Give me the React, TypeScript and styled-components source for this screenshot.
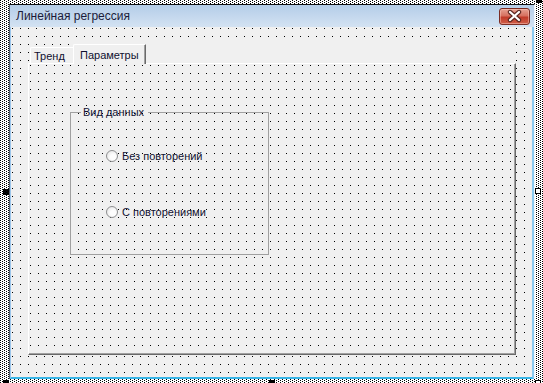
import styled, { createGlobalStyle } from "styled-components";

const GlobalStyle = createGlobalStyle`
  html, body {
    margin: 0;
    padding: 0;
    background: #fff;
  }
  body {
    font-family: "Liberation Sans", Arial, sans-serif;
  }
`;

const dots = (color: string) =>
  `conic-gradient(at 1px 1px, transparent 75%, ${color} 0)`;

export default function App() {
  return (
    <>
      <GlobalStyle />
      <SCanvas>
        <SWindow>
          <STitleBar>
            <STitle>Линейная регрессия</STitle>
            <SCloseButton>
              <svg width="31" height="17" viewBox="0 0 31 17">
                <path
                  d="M11 4 L20 12 M20 4 L11 12"
                  stroke="#5b2620"
                  strokeWidth="4.4"
                  strokeLinecap="round"
                />
                <path
                  d="M11 4 L20 12 M20 4 L11 12"
                  stroke="#fff"
                  strokeWidth="2.2"
                  strokeLinecap="round"
                />
              </svg>
            </SCloseButton>
          </STitleBar>
          <SBody>
            <SMultiPage>
              <STabRow>
                <STab>Тренд</STab>
                <STab selected>Параметры</STab>
                <STabFiller />
              </STabRow>
              <SPage>
                <SFrame>
                  <SLegend>Вид данных</SLegend>
                  <SRadioList>
                    <SRadioRow>
                      <SRadioCircle />
                      <span>Без повторений</span>
                    </SRadioRow>
                    <SRadioRow>
                      <SRadioCircle />
                      <span>С повторениями</span>
                    </SRadioRow>
                  </SRadioList>
                </SFrame>
              </SPage>
            </SMultiPage>
          </SBody>
        </SWindow>
        {/* grab handles of the selected form */}
        <SHandle $x={536} $y={-3} $filled />
        <SHandle $x={3} $y={189} $filled />
        <SHandle $x={535} $y={188} />
        <SHandle $x={3} $y={380} $filled />
        <SHandle $x={269} $y={380} $filled />
        <SHandle $x={535} $y={380} />
      </SCanvas>
    </>
  );
}

const SCanvas = styled.div`
  position: relative;
  overflow: hidden;
  width: 543px;
  height: 383px;
  box-sizing: border-box;
  padding: 4px 8px 5px 9px;
  background-color: #fff;
  background-image: ${dots("#000")}, ${dots("#000")};
  background-size: 4px 2px;
  background-position: 0 0, 2px 1px;
`;

const SWindow = styled.div`
  height: 100%;
  display: flex;
  flex-direction: column;
  border-top: 1px solid #111;
  border-left: 1px solid #55606c;
  border-right: 1px solid #eef6fc;
`;

const STitleBar = styled.div`
  height: 22px;
  flex: none;
  display: flex;
  align-items: center;
  justify-content: space-between;
  padding: 0 4px 0 6px;
  background: linear-gradient(#b4cde8, #d3e2f2);
`;

const STitle = styled.span`
  font-size: 12px;
  color: #1b1b3a;
`;

const SCloseButton = styled.div`
  width: 31px;
  height: 17px;
  box-sizing: border-box;
  border: 1px solid #7a2c24;
  border-radius: 3px;
  display: flex;
  align-items: center;
  justify-content: center;
  background: linear-gradient(#e6a192, #d6705f 45%, #c13b2a 55%, #cf5f49);
  box-shadow: inset 0 0 0 1px rgba(255, 210, 200, 0.45);

  > svg {
    flex: none;
    margin: -1px;
  }
`;

const SBody = styled.div`
  flex: 1;
  box-sizing: border-box;
  border-left: 1px solid #9cc5ea;
  border-right: 2px solid #8ccaef;
  border-bottom: 2px solid #38b5e6;
  background-color: #f0f0f0;
  background-image: ${dots("#000")};
  background-size: 8px 8px;
  background-position: 1px 1px;
  padding: 13px 0 0 17px;
`;

const SMultiPage = styled.div`
  width: 488px;
  display: flex;
  flex-direction: column;
  font-size: 11px;
  color: #101030;
`;

const STabRow = styled.div`
  position: relative;
  z-index: 1;
  height: 24px;
  margin-bottom: -1px;
  display: flex;
  align-items: flex-end;
  padding-left: 2px;
`;

const STab = styled.div<{ selected?: boolean }>`
  box-sizing: border-box;
  height: ${({ selected }) => (selected ? "20px" : "16px")};
  width: ${({ selected }) => (selected ? "73px" : "43px")};
  margin-bottom: ${({ selected }) => (selected ? "0" : "1px")};
  padding: ${({ selected }) => (selected ? "0 0 0 6px" : "0 0 0 3px")};
  display: flex;
  align-items: center;
  background: #f0f0f0;
  border-top: 1px solid #fff;
  border-left: 1px solid #fff;
  border-right: ${({ selected }) => (selected ? "1px solid #6a6a6a" : "none")};
  box-shadow: ${({ selected }) =>
    selected ? "inset -1px 0 0 #a0a0a0" : "none"};
  border-top-left-radius: 2px;
`;

const STabFiller = styled.div`
  flex: 1;
  align-self: stretch;
  margin-bottom: 1px;
  background: #f0f0f0;
`;

const SPage = styled.div`
  box-sizing: border-box;
  height: 292px;
  border-top: 1px solid #fff;
  border-left: 1px solid #fff;
  border-right: 1px solid #6a6a6a;
  border-bottom: 1px solid #6a6a6a;
  box-shadow: inset -1px -1px 0 #a0a0a0;
  background-color: #f0f0f0;
  background-image: ${dots("#000")};
  background-size: 8px 8px;
  background-position: 1px 1px;
  padding: 41px 0 0 41px;
`;

const SFrame = styled.fieldset`
  box-sizing: border-box;
  width: 199px;
  height: 150px;
  margin: 0;
  padding: 0;
  border: 1px solid #a0a0a0;
  min-width: 0;
`;

const SLegend = styled.legend`
  margin-left: 10px;
  padding: 0 4px 0 2px;
  line-height: 14px;
  font-size: 11px;
  color: #101030;
`;

const SRadioList = styled.div`
  display: flex;
  flex-direction: column;
  row-gap: 40px;
  padding: 29px 0 0 35px;
`;

const SRadioRow = styled.div`
  height: 16px;
  display: flex;
  align-items: center;
  column-gap: 4px;
`;

const SRadioCircle = styled.span`
  width: 12px;
  height: 12px;
  box-sizing: border-box;
  border-radius: 50%;
  border: 1px solid #8e8f90;
  background: radial-gradient(circle at 60% 60%, #fdfdfd 30%, #dedede 100%);
`;

const SHandle = styled.div<{ $x: number; $y: number; $filled?: boolean }>`
  position: absolute;
  left: ${({ $x }) => $x}px;
  top: ${({ $y }) => $y}px;
  width: 6px;
  height: 6px;
  box-sizing: border-box;
  border: 1px solid #000;
  background: ${({ $filled }) => ($filled ? "#000" : "#fff")};
`;
